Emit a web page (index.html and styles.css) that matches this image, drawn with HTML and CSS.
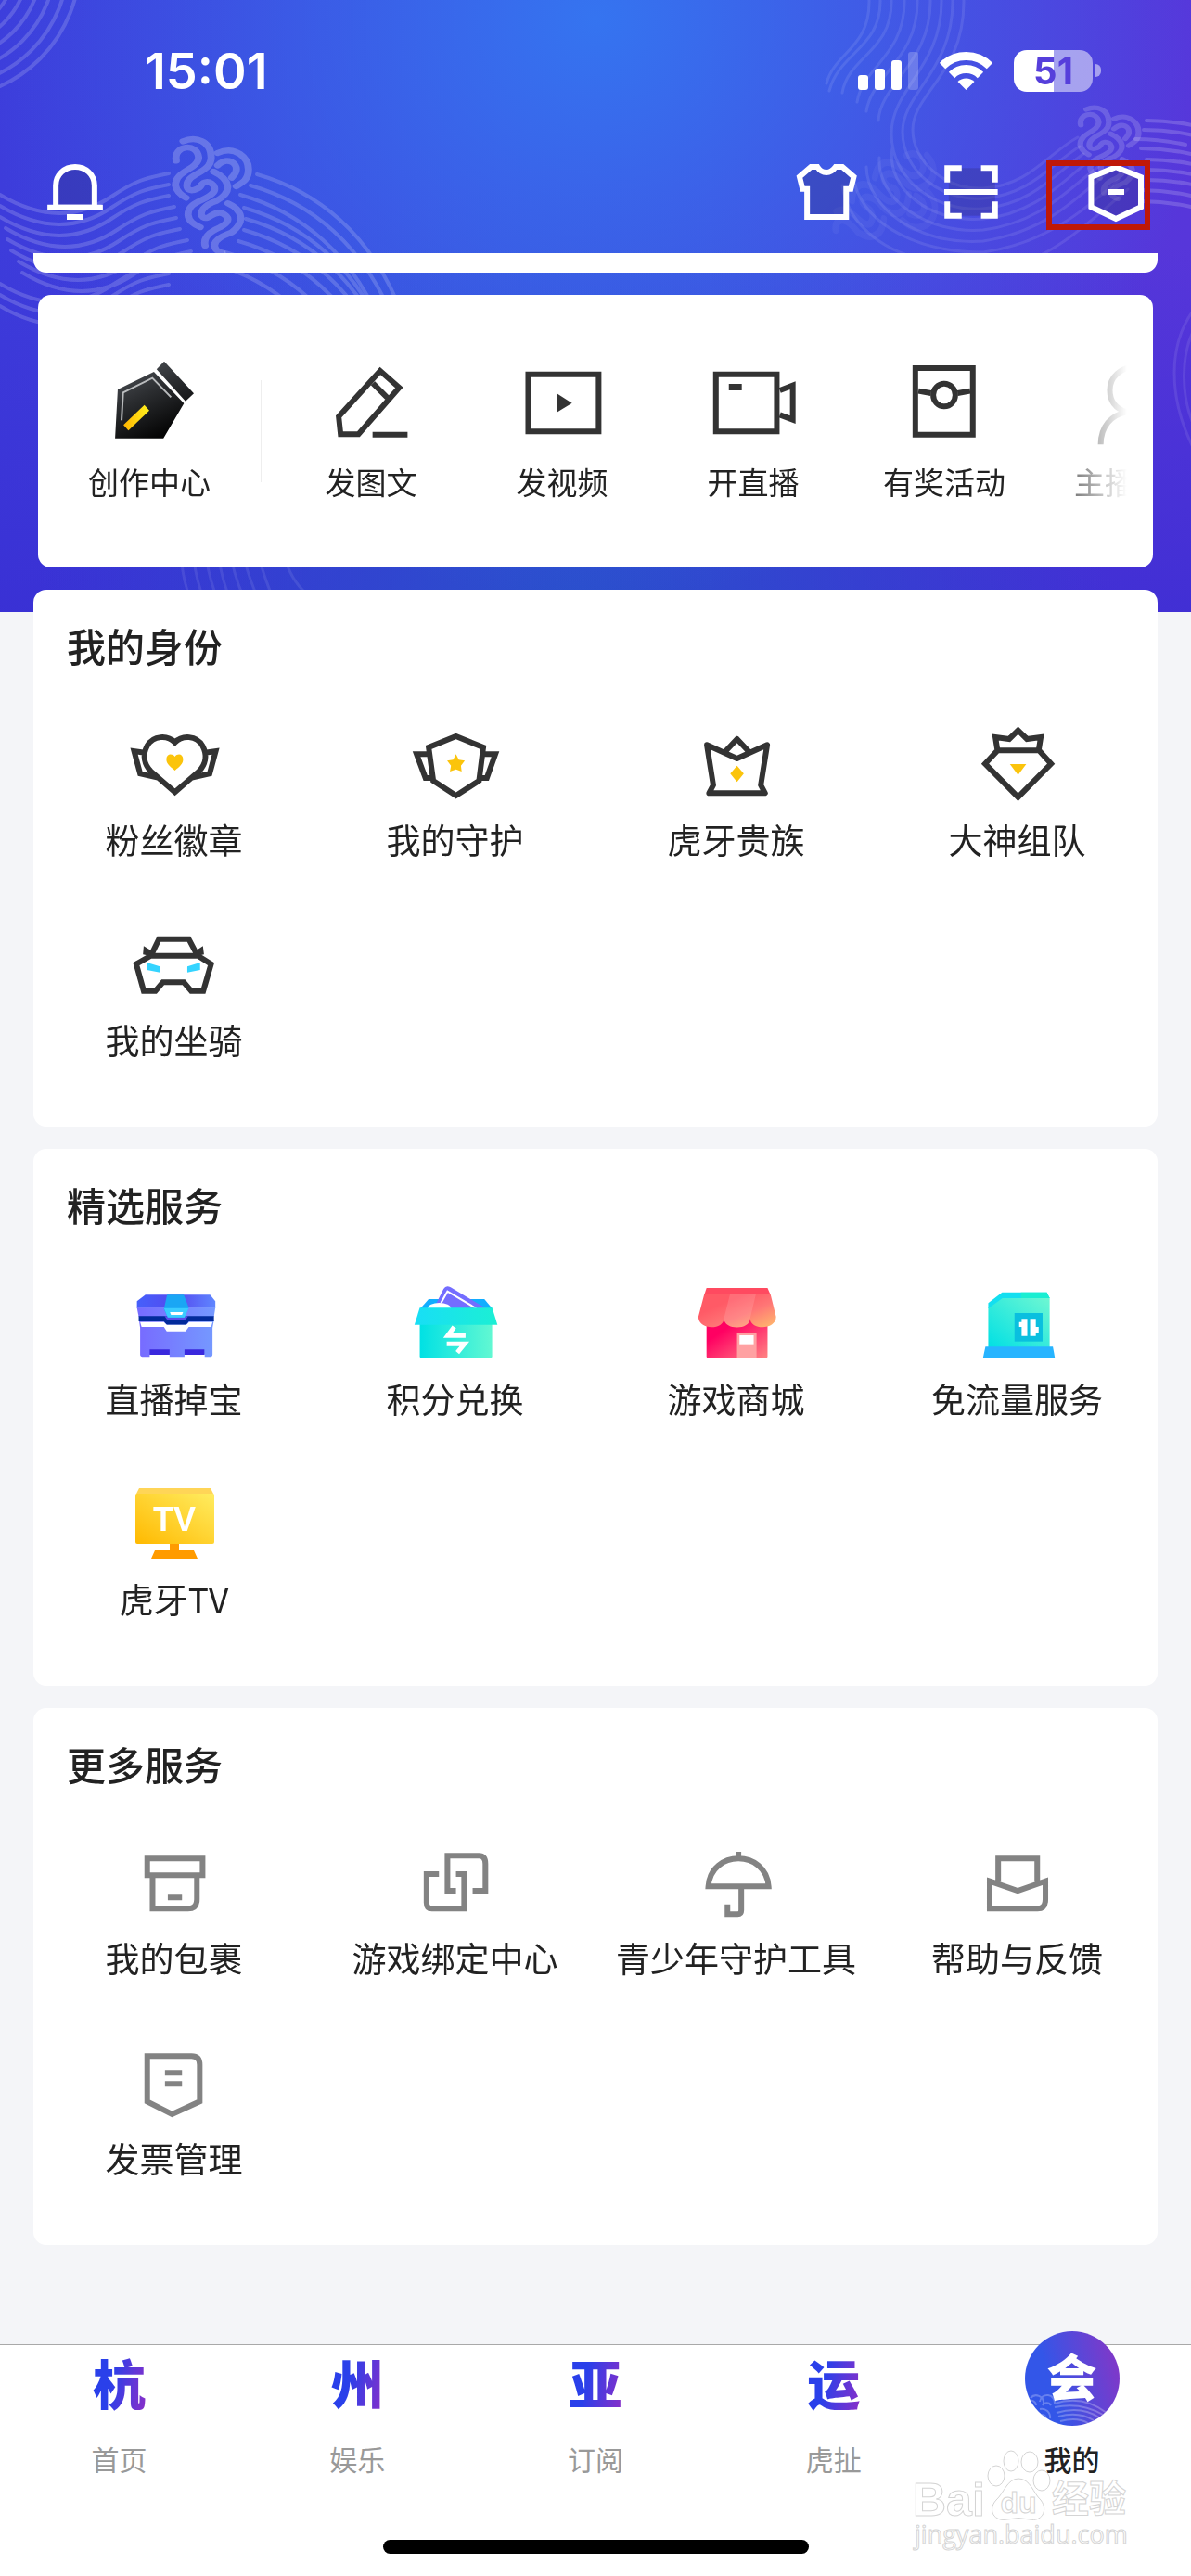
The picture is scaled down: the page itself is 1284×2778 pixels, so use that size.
FILE: index.html
```html
<!DOCTYPE html>
<html lang="zh-CN">
<head>
<meta charset="utf-8">
<meta name="viewport" content="width=device-width, initial-scale=1">
<title>我的</title>
<link rel="stylesheet" href="styles.css">
</head>
<body>
<div class="app">
  <div class="backdrop" aria-hidden="true">
    <svg class="waves" viewBox="0 0 1284 660" preserveAspectRatio="xMidYMin slice">
      <defs>
        <path id="swell" d="M0 210C50 240 90 232 120 212S160 192 182 187"/>
        <path id="crest" d="M277 188C340 206 400 250 434 340"/>
        <path id="bank" d="M1236 130C1256 130 1272 132 1290 136"/>
        <g id="knot">
          <path d="M482 457C515 440 556 455 556 510C556 560 492 560 492 600C492 630 530 610 530 598C545 575 575 600 562 622C545 650 495 650 495 695C497 715 508 725 527 735"/>
          <path d="M464 520C455 470 520 460 523 510C520 550 462 550 462 600C465 620 475 630 490 640"/>
          <path d="M573 495C620 470 655 510 654 550C654 580 640 590 622 603"/>
          <path d="M573 535C600 505 625 530 622 550C622 560 615 568 610 575"/>
          <path d="M562 555C605 580 615 620 570 650C540 660 520 690 535 703C550 715 560 680 585 690C610 705 600 722 580 735C550 750 535 770 540 795"/>
          <path d="M600 658C640 680 645 720 610 752C580 765 560 780 566 800C568 810 575 815 585 818"/>
        </g>
      </defs>
      <g class="rings">
        <circle cx="-60" cy="-40" r="146"/><circle cx="-60" cy="-40" r="133"/><circle cx="-60" cy="-40" r="119"/><circle cx="-60" cy="-40" r="105"/><circle cx="-60" cy="-40" r="91"/><circle cx="-60" cy="-40" r="77"/>
      </g>
      <g class="lines">
        <use href="#swell"/><use href="#swell" y="12"/><use href="#swell" y="24"/><use href="#swell" x="6" y="36"/><use href="#swell" x="8" y="48"/><use href="#swell" x="12" y="60"/><use href="#swell" x="20" y="72"/><use href="#swell" x="24" y="84"/><use href="#swell" y="96"/><use href="#swell" y="108"/><use href="#swell" y="120"/>
        <use href="#crest"/><use href="#crest" x="-7" y="12"/><use href="#crest" x="-18" y="22"/><use href="#crest" x="-14" y="36"/><use href="#crest" x="-12" y="48"/><use href="#crest" x="-14" y="60"/><use href="#crest" x="-20" y="72"/><use href="#crest" x="-34" y="84"/><use href="#crest" x="-48" y="96"/>
      </g>
      <g class="knot"><use href="#knot" transform="scale(.4095 .3333)"/></g>
      <g class="lines faint">
        <path d="M1039 0C1040 80 984 100 984 140C984 175 1020 205 1060 203C1110 200 1130 165 1162 148"/>
        <path d="M1027 0C1028 76 973 100 973 142C973 185 1015 217 1060 214C1112 210 1135 175 1164 158"/>
        <path d="M1015 0C1016 72 961 95 961 144C961 195 1010 229 1060 225C1114 220 1140 185 1168 166"/>
        <path d="M1003 0C1004 68 949 90 947 130M962 160C955 205 1005 241 1060 236C1118 230 1145 195 1174 174"/>
        <path d="M989 0C990 64 940 80 934 120M948 170C945 215 1000 253 1060 248C1122 240 1150 205 1184 180"/>
        <path d="M975 0C976 60 930 72 924 110M934 180C935 225 990 265 1060 260C1126 250 1160 215 1196 184"/>
        <path d="M961 0C962 56 915 60 908 100M920 190C925 235 980 272 1060 272C1130 262 1170 225 1206 194"/>
        <path d="M949 0C950 52 905 56 894 98M908 200C915 245 960 285 1040 284M1120 276C1150 262 1180 235 1216 204"/>
        <path d="M937 0C938 52 900 56 891 90"/>
      </g>
      <g class="lines">
        <use href="#bank"/><use href="#bank" x="-3" y="10"/><use href="#bank" x="-12" y="20"/><use href="#bank" x="-6" y="30"/><use href="#bank" y="42"/><use href="#bank" y="53"/><use href="#bank" y="64"/><use href="#bank" x="-6" y="75"/><use href="#bank" x="-6" y="87"/>
      </g>
      <g class="knot small"><use href="#knot" transform="translate(1013 -4) scale(.328 .267)"/></g>
      <g class="knot faint"><use href="#knot" transform="translate(1075 -70) rotate(70) scale(.4095 .3333)"/></g>
      <g class="lines faint">
        <path d="M196 605Q197 625 205 645M209 605Q212 625 219 645M223 605Q226 625 234 645M236 605Q240 625 247 645M250 605Q254 625 263 645M264 605Q269 625 278 645M280 605Q286 625 294 645M308 605Q316 630 336 645"/>
        <path d="M1290 330C1258 370 1258 430 1290 490M1290 350C1272 380 1272 430 1290 465"/>
      </g>
    </svg>
  </div>

  <header class="header">
    <div class="status">
      <time class="clock">15:01</time>
      <div class="status-icons">
        <svg class="signal" viewBox="0 0 65 41" role="img" aria-label="信号">
          <rect x="0" y="25" width="11" height="16" rx="3"/><rect x="18" y="18" width="11" height="23" rx="3"/><rect x="36" y="9" width="11" height="32" rx="3"/><rect x="54" y="0" width="11" height="41" rx="3" opacity=".22"/>
        </svg>
        <svg class="wifi" viewBox="0 0 57 42" role="img" aria-label="无线网络">
          <path d="M3 16A36 36 0 0 1 54 16M13 26A22 22 0 0 1 44 26"/><path class="dot" d="M28.500 42L19.500 33A13 13 0 0 1 37.500 33Z"/>
        </svg>
        <div class="battery"><span>51</span></div>
      </div>
    </div>
    <div class="toolbar">
      <button class="tool" type="button" aria-label="消息"><svg viewBox="110 519 176 216" preserveAspectRatio="none"><path class="tint" d="M147 671V600C147 565 170 540 198 540S249 565 249 600V671Z"/><path d="M125 671H271M176 702H220"/></svg></button>
      <div class="tools">
        <button class="tool" type="button" aria-label="装扮"><svg viewBox="520 519 176 216" preserveAspectRatio="none"><path class="tint" d="M567 540L537 572L545 611H557V702H660V611H672L680 572L650 540H632C625 552 618 558 608 558S590 552 584 540Z"/></svg></button>
        <button class="tool" type="button" aria-label="扫一扫"><svg viewBox="901 519 176 216" preserveAspectRatio="none"><rect class="shade" x="930" y="544" width="122" height="154"/><path d="M926 590V544H964M1015 544H1052V590M926 652V698H964M1015 698H1052V652M918 621H1059"/></svg></button>
        <button class="tool marked" type="button" aria-label="设置"><svg viewBox="1282 519 176 216" preserveAspectRatio="none"><path class="tint" d="M1370 541L1436 573V670L1370 708L1305 670V573Z"/><path d="M1348 621H1392"/></svg></button>
      </div>
    </div>
  </header>

  <main class="content">
    <div class="card-end"></div>

    <section class="creator">
      <button class="item lead" type="button">
        <svg class="icon solid" viewBox="276 198 234 288" preserveAspectRatio="none">
          <defs>
            <linearGradient id="ink" x1="0" y1="0" x2=".5" y2="1"><stop offset="0" stop-color="#565a60"/><stop offset=".5" stop-color="#2b2d30"/><stop offset="1" stop-color="#050505"/></linearGradient>
            <linearGradient id="gold"><stop offset="0" stop-color="#ffb400"/><stop offset="1" stop-color="#fff21f"/></linearGradient>
          </defs>
          <path fill="url(#ink)" d="M310 300L405 243L484 345L430 458H303ZM412 235L432 209L510 313L488 338Z"/>
          <path fill="none" stroke="#b9bbbd" stroke-width="2" d="M320 400L324 310L401 263L450 325"/>
          <path fill="url(#gold)" d="M325 415L380 350L393 368L338 433Z"/>
        </svg>
        <span>创作中心</span>
      </button>
      <div class="creator-list">
        <button class="item" type="button"><svg class="icon" viewBox="862 198 234 288" preserveAspectRatio="none"><path d="M1003 240L1053 294L946 445H899L894 388ZM984 280L1023 328M983 446H1075"/></svg><span>发图文</span></button>
        <button class="item" type="button"><svg class="icon" viewBox="1365 198 234 288" preserveAspectRatio="none"><rect x="1393" y="251" width="185" height="185"/><path class="fill" d="M1468 313L1508 344L1468 374Z"/></svg><span>发视频</span></button>
        <button class="item" type="button"><svg class="icon" viewBox="300 198 234 288" preserveAspectRatio="none"><rect x="319" y="251" width="160" height="185"/><path class="fill" d="M353 282H387V303H353Z"/><path d="M487 303L521 287V398L487 382"/></svg><span>开直播</span></button>
        <button class="item" type="button"><svg class="icon" viewBox="803 198 234 288" preserveAspectRatio="none"><rect x="844" y="231" width="151" height="215"/><ellipse cx="920" cy="318" rx="29" ry="37"/><path d="M852 305L885 312M955 312L988 305"/></svg><span>有奖活动</span></button>
        <button class="item" type="button"><svg class="icon" viewBox="1306 198 234 288" preserveAspectRatio="none"><path d="M1332 478C1332 420 1360 382 1400 373C1372 362 1356 340 1356 302C1356 260 1385 228 1423 228S1490 260 1490 302C1490 340 1474 362 1446 373C1486 382 1514 420 1514 478"/></svg><span>主播任务</span></button>
      </div>
    </section>

    <section class="card">
      <h2>我的身份</h2>
      <div class="grid">
        <button class="item" type="button"><svg class="icon" viewBox="286 48 251 288" preserveAspectRatio="none"><path d="M413 122C393 98 352 98 335 133C320 165 328 195 345 215L413 283L481 215C498 195 506 165 491 133C474 98 433 98 413 122ZM328 155L298 150L315 223L365 236M498 155L528 150L511 223L461 236"/><path class="accent" d="M413 168C405 157 390 158 389 175C388 192 400 200 413 213C426 200 437 192 436 175C435 158 420 157 413 168Z"/></svg><span>粉丝徽章</span></button>
        <button class="item" type="button"><svg class="icon" viewBox="1078 48 251 288" preserveAspectRatio="none"><path d="M1205 102L1282 138L1270 246L1205 294L1141 246L1128 138ZM1128 160H1094L1119 237H1142M1282 160H1316L1292 237H1270"/><path class="accent" d="M1205 160L1213 178L1230 181L1219 197L1221 216L1205 209L1188 216L1191 197L1180 181L1197 178Z"/></svg><span>我的守护</span></button>
        <button class="item" type="button"><svg class="icon" viewBox="223 48 251 288" preserveAspectRatio="none"><path stroke-linejoin="round" d="M265 130L350 174L435 130L417 260L429 286H271L283 260ZM318 150L350 111L382 150"/><path class="accent" d="M350 197L369 223L350 250L331 223Z"/></svg><span>虎牙贵族</span></button>
        <button class="item" type="button"><svg class="icon" viewBox="1015 48 251 288" preserveAspectRatio="none"><path d="M1084 148H1201L1235 191L1142 299L1049 191ZM1084 148L1078 105L1117 111L1142 83L1167 111L1206 105L1200 148"/><path class="accent" d="M1119 192H1165L1142 227Z"/></svg><span>大神组队</span></button>
        <button class="item" type="button"><svg class="icon" viewBox="286 696 251 288" preserveAspectRatio="none"><path d="M347 808L368 758H452L475 808M304 839L345 812H478L515 839L493 926H459L438 898H379L358 926H325Z"/><path class="fill" d="M325 781L349 797L341 812L323 808ZM492 781L470 797L478 812L495 808Z"/><path fill="#35d4ff" stroke="none" d="M334 834L371 847V866L334 858ZM484 834L448 847V866L484 858Z"/></svg><span>我的坐骑</span></button>
      </div>
    </section>

    <section class="card">
      <h2>精选服务</h2>
      <div class="grid">
        <button class="item" type="button"><svg class="icon solid" viewBox="286 57 251 288" preserveAspectRatio="none">
          <defs><linearGradient id="lid"><stop offset="0" stop-color="#4560fb"/><stop offset=".5" stop-color="#5549ef"/><stop offset="1" stop-color="#5f86ff"/></linearGradient><linearGradient id="chest"><stop offset="0" stop-color="#776bff"/><stop offset="1" stop-color="#7599ff"/></linearGradient></defs>
          <path fill="url(#lid)" d="M330 109H512L527 130V152H306V130Z"/><path fill="url(#chest)" d="M306 151H527L523 180H311Z"/>
          <path fill="url(#chest)" d="M312 192H523L519 216V302Q519 310 510 310H497V302H440V310H398V302H342V310H325Q315 310 315 302V216Z"/>
          <path fill="#022b9b" d="M311 178H523V195H452L445 206H390L382 195H311Z"/><path fill="#5a4de8" d="M384 178H450L443 190H391Z"/>
          <path fill="#fff" d="M315 197H382L390 206H445L453 197H519L515 213H452L443 227H390L382 213H319Z"/>
          <path fill="#3a28dd" d="M342 286H398V303H342ZM440 286H496V303H440Z"/>
          <path fill="#1aa6f4" d="M391 109H438L452 150L440 182H393L382 155Z"/><path fill="#3acbff" d="M382 152H452L440 182H393Z"/><path fill="#fff" d="M399 165H436L433 174H402Z"/>
        </svg><span>直播掉宝</span></button>
        <button class="item" type="button"><svg class="icon solid" viewBox="1078 57 251 288" preserveAspectRatio="none">
          <defs><linearGradient id="box"><stop offset="0" stop-color="#00e1e4"/><stop offset="1" stop-color="#62f8d2"/></linearGradient><linearGradient id="flap"><stop offset="0" stop-color="#18def6"/><stop offset="1" stop-color="#1cefd4"/></linearGradient></defs>
          <path fill="#12adff" d="M1128 123H1285L1307 153H1105Z"/>
          <path fill="#746dff" d="M1148 140L1170 90Q1177 76 1190 85L1290 153H1148Z"/><path fill="none" stroke="#fff" stroke-width="2" d="M1163 135L1181 98L1262 153"/>
          <ellipse cx="1158" cy="153" rx="33" ry="18" fill="#fff"/>
          <path fill="url(#box)" d="M1103 204H1307V309Q1307 315 1300 315H1110Q1103 315 1103 309Z"/><path fill="url(#flap)" d="M1103 151H1307L1322 206H1088Z"/>
          <path fill="none" stroke="#fff" stroke-width="5" d="M1232 241H1182L1200 213M1179 268H1229L1209 296"/>
        </svg><span>积分兑换</span></button>
        <button class="item" type="button"><svg class="icon solid" viewBox="223 57 251 288" preserveAspectRatio="none">
          <defs><linearGradient id="shop" x1="0" y1="0" x2="1" y2="1"><stop offset=".3" stop-color="#ff0062"/><stop offset="1" stop-color="#ff8583"/></linearGradient><linearGradient id="awning" x1="0" y1="0" x2="1" y2="1"><stop offset=".3" stop-color="#ff5a66"/><stop offset=".6" stop-color="#ff7676"/><stop offset="1" stop-color="#ffbd6c"/></linearGradient></defs>
          <path fill="url(#shop)" d="M264 180H436V309Q436 315 430 315H270Q264 315 264 309Z"/><path fill="#ff4a60" d="M264 87H436L444 108H258Z"/>
          <path fill="url(#awning)" d="M258 106H444L460 180C460 224 387 224 387 185C387 224 313 224 313 185C313 224 241 224 241 180Z"/><path fill="#fff" opacity=".12" d="M330 108H403L387 185C387 224 313 224 313 185Z"/>
          <path fill="#ffa1a2" d="M350 232H405V313H350Z"/><path fill="#fff" d="M357 240H397V269H357Z"/>
        </svg><span>游戏商城</span></button>
        <button class="item" type="button"><svg class="icon solid" viewBox="1015 57 251 288" preserveAspectRatio="none">
          <defs><linearGradient id="sim" x1="0" y1="1" x2="1" y2="0"><stop offset="0" stop-color="#00e0e4"/><stop offset="1" stop-color="#6ff7d2"/></linearGradient></defs>
          <path fill="url(#sim)" d="M1058 150L1097 118H1231V280H1058Z"/><path fill="#13dff0" d="M1058 136L1097 101H1223L1231 120H1098L1058 153Z"/><path fill="#1aeed2" d="M1150 101H1223L1231 120H1150Z"/>
          <path fill="#0abfdf" d="M1132 168H1211V260H1132Z"/><path fill="#fff" d="M1152 187H1168V242H1152V213H1145V197H1152ZM1176 187H1192V213H1200V232H1192V242H1176Z"/>
          <path fill="#27b4ff" d="M1050 277H1240L1246 314H1043Z"/>
        </svg><span>免流量服务</span></button>
        <button class="item" type="button"><svg class="icon solid" viewBox="0 0 96 96">
          <defs><linearGradient id="tv" x1="0" y1="1" x2="1" y2="0"><stop offset="0" stop-color="#ffb900"/><stop offset="1" stop-color="#ffec60"/></linearGradient></defs>
          <path fill="#ffd557" d="M10 10H87L91 18H6Z"/><rect x="6" y="16" width="85" height="54" rx="2" fill="url(#tv)"/><path fill="#ff9b00" d="M43 70H53V77H69L73 86H23L27 77H43Z"/>
          <text class="tv-text" x="48" y="56" text-anchor="middle">TV</text>
        </svg><span>虎牙TV</span></button>
      </div>
    </section>

    <section class="card">
      <h2>更多服务</h2>
      <div class="grid muted">
        <button class="item" type="button"><svg class="icon" viewBox="286 66 251 288" preserveAspectRatio="none"><path d="M335 133H491V187H335ZM350 190V295H450Q475 295 475 265V190M393 259H433"/></svg><span>我的包裹</span></button>
        <button class="item" type="button"><svg class="icon" viewBox="1078 66 251 288" preserveAspectRatio="none"><path d="M1157 183H1122V275Q1122 295 1137 295H1228V183H1205M1205 237H1181V124H1270Q1288 124 1288 150V237H1252"/></svg><span>游戏绑定中心</span></button>
        <button class="item" type="button"><svg class="icon" viewBox="223 66 251 288" preserveAspectRatio="none"><path d="M269 223C276 103 432 103 439 223ZM354 111V133M362 223V300Q362 313 352 313H323V281"/></svg><span>青少年守护工具</span></button>
        <button class="item" type="button"><svg class="icon" viewBox="1015 66 251 288" preserveAspectRatio="none"><path d="M1086 208V133H1196V208M1062 206L1141 237L1219 206V265Q1219 295 1197 295H1062Z"/></svg><span>帮助与反馈</span></button>
        <button class="item" type="button"><svg class="icon" viewBox="286 714 251 288" preserveAspectRatio="none"><path d="M335 772H460Q483 772 483 800V919L405 960L335 919ZM385 826H433M385 862H433"/></svg><span>发票管理</span></button>
      </div>
    </section>
  </main>

  <nav class="tabs">
    <div class="tab-row">
      <a class="tab" href="#home"><span class="glyph"><b>杭</b></span><span class="name">首页</span></a>
      <a class="tab" href="#fun"><span class="glyph"><b>州</b></span><span class="name">娱乐</span></a>
      <a class="tab" href="#subs"><span class="glyph"><b>亚</b></span><span class="name">订阅</span></a>
      <a class="tab" href="#talk"><span class="glyph"><b>运</b></span><span class="name">虎扯</span></a>
      <a class="tab active" href="#me" aria-current="page"><span class="glyph">
        <svg class="ripples" viewBox="0 0 102 102" aria-hidden="true"><path d="M6 72A8 8 0 0 1 20 78M2 76A6 6 0 0 1 12 80M16 76A8 8 0 0 1 32 78M19 80A5 5 0 0 1 28 80M16 84A9 9 0 0 1 27 94M18 90A5 5 0 0 1 22 98M32 78Q62 68 88 88M32 82Q60 76 84 90M34 88Q60 80 80 93M36 92Q58 86 74 96M38 97Q56 92 68 99"/></svg><b>会</b></span><span class="name">我的</span></a>
    </div>
    <div class="home-bar"></div>
    <svg class="watermark" viewBox="0 0 240 120" aria-hidden="true">
      <text class="wm-brand" x="4" y="77">Bai</text>
      <path d="M118 37C131 37 134 53 142 60C151 72 142 84 130 81Q118 78 106 81C92 84 84 71 94 60C102 53 106 37 118 37Z"/>
      <ellipse cx="94" cy="34" rx="9" ry="11"/><ellipse cx="110" cy="18" rx="8" ry="11"/><ellipse cx="130" cy="19" rx="9" ry="11"/><ellipse cx="143" cy="39" rx="9" ry="11"/>
      <text class="wm-du" x="118" y="74" text-anchor="middle">du</text>
      <text class="wm-cn" x="154" y="73">经验</text>
      <text class="wm-url" x="6" y="107">jingyan.baidu.com</text>
    </svg>
  </nav>
</div>
</body>
</html>
```
FILE: styles.css
```css
*,
*::after { box-sizing: border-box; }

body {
  margin: 0;
  background: #f4f5f8;
  color: #222;
  font-family: "Noto Sans CJK SC", sans-serif;
}

button {
  padding: 0;
  border: 0;
  background: none;
  color: inherit;
  font: inherit;
}

svg { display: block; }

.app {
  position: relative;
  display: flex;
  flex-direction: column;
  min-height: 100vh;
}

/* backdrop */
.backdrop {
  position: absolute;
  inset: 0 0 auto;
  height: 660px;
  overflow: hidden;
  background:
    radial-gradient(ellipse 52% 95% at 50% 3%, #3574f0, rgba(53, 116, 240, 0)),
    radial-gradient(ellipse 45% 70% at 48% 100%, #2a50cc, rgba(42, 80, 204, 0)),
    linear-gradient(rgba(58, 44, 214, 0) 40%, rgba(56, 44, 210, .7)),
    linear-gradient(90deg, #3d3cdb, #4440da 45%, #5736da);
}

.waves {
  width: 100%;
  height: 100%;
  fill: none;
  stroke: #fff;
  stroke-linecap: round;
}

.rings { stroke-width: 4; opacity: .16; }
.lines { stroke-width: 4; opacity: .17; }
.knot { stroke-width: 19; opacity: .22; }
.knot.small { opacity: .16; }
.lines.faint { stroke-width: 3; opacity: .09; }
.knot.faint { opacity: .04; }

/* header */
.header {
  position: relative;
  height: 273px;
  padding: 48px 45px 0;
  color: #fff;
}

.status {
  display: flex;
  align-items: center;
  justify-content: space-between;
  height: 56px;
  padding: 0 51px 0 111px;
}

.clock {
  padding-top: 2px;
  font: 600 54px/56px Inter, sans-serif;
}

.status-icons {
  display: flex;
  align-items: center;
  gap: 23px;
}

.signal { width: 65px; height: 41px; fill: #fff; }
.wifi { width: 57px; height: 42px; fill: none; stroke: #fff; stroke-width: 9; }
.wifi .dot { fill: #fff; stroke: none; }

.battery {
  position: relative;
  width: 85px;
  height: 45px;
  margin-right: 10px;
  border-radius: 14px;
  background: linear-gradient(90deg, #fff 51%, rgba(255, 255, 255, .5) 51%);
  color: #563fdb;
  font: 700 40px/45px Inter, sans-serif;
  text-align: center;
}

.battery::after {
  content: "";
  position: absolute;
  top: 15px;
  left: 88px;
  width: 6px;
  height: 14px;
  border-radius: 0 6px 6px 0;
  background: rgba(255, 255, 255, .5);
}

.toolbar {
  display: flex;
  justify-content: space-between;
  margin-top: 69px;
}

.tools { display: flex; gap: 84px; }

.tool {
  position: relative;
  width: 72px;
  height: 72px;
}

.tool svg {
  width: 72px;
  height: 72px;
  fill: none;
  stroke: #fff;
  stroke-width: 6;
}

.tool svg * { vector-effect: non-scaling-stroke; }
.tool svg .tint { fill: rgba(46, 44, 120, .3); }
.tool svg .shade { fill: rgba(46, 44, 120, .3); stroke: none; }

.marked::after {
  content: "";
  position: absolute;
  top: 0;
  right: -1px;
  width: 112px;
  height: 75px;
  border: 6px solid #bf1807;
}

/* content */
.content {
  position: relative;
  flex: 1;
  display: flex;
  flex-direction: column;
  gap: 24px;
  padding: 0 36px 107px;
}

.card-end {
  height: 21px;
  border-radius: 0 0 14px 14px;
  background: #fff;
}

.card,
.creator {
  border-radius: 14px;
  background: #fff;
}

.item {
  display: flex;
  flex-direction: column;
  align-items: center;
  gap: 6px;
  font-size: 37px;
  line-height: 54px;
  white-space: nowrap;
}

.icon {
  width: 96px;
  height: 96px;
  overflow: visible;
  fill: none;
  stroke: #333;
  stroke-width: 6;
}

.icon * { vector-effect: non-scaling-stroke; }
.icon.solid { stroke: none; }
.icon .fill { fill: #333; stroke: none; }
.icon .accent { fill: #fbc40c; stroke: none; }
.muted .icon { stroke: #838383; }

.tv-text {
  fill: #fff;
  font: 700 36px "Liberation Sans", sans-serif;
}

.creator {
  display: flex;
  margin: 0 5px;
  padding: 68px 28px 66px 0;
}

.creator .item {
  flex: none;
  width: 206px;
  gap: 10px;
  font-size: 33px;
}

.creator .lead {
  width: 240px;
}

.creator-list {
  flex: 1;
  display: flex;
  min-width: 0;
  padding-left: 16px;
  overflow: hidden;
  background: linear-gradient(#eee, #eee) 0 24px / 1px 110px no-repeat;
  -webkit-mask-image: linear-gradient(270deg, transparent, #000 96px);
  mask-image: linear-gradient(270deg, transparent, #000 96px);
}

.card { padding: 30px 0 67px; }

.card h2 {
  margin: 0 0 50px;
  padding: 0 36px;
  font-size: 42px;
  font-weight: 500;
  line-height: 60px;
}

.grid {
  display: grid;
  grid-template-columns: repeat(4, 1fr);
  row-gap: 60px;
}

/* tab bar */
.tabs {
  position: relative;
  padding-bottom: 24px;
  border-top: 1px solid #a9a9a9;
  background: #fff;
}

.tab-row {
  display: grid;
  grid-template-columns: repeat(5, 1fr);
}

.tab {
  display: flex;
  flex-direction: column;
  align-items: center;
  gap: 15px;
  margin-top: -15px;
  color: #999;
  font-size: 30px;
  line-height: 40px;
  text-decoration: none;
}

.glyph {
  position: relative;
  display: flex;
  align-items: center;
  justify-content: center;
  width: 102px;
  height: 102px;
  padding-top: 6px;
  border-radius: 50%;
}

.glyph b {
  background: linear-gradient(100deg, #2a40ea 35%, #8a2fc8);
  -webkit-background-clip: text;
  background-clip: text;
  color: transparent;
  font-size: 57px;
  font-weight: 900;
  line-height: 72px;
}

.tab.active { color: #222; font-weight: 500; }

.tab.active .glyph {
  overflow: hidden;
  padding: 0 0 6px;
  background: linear-gradient(75deg, #3356e8 30%, #8a34c4);
}

.tab.active b { position: relative; background: none; color: #fff; font-size: 54px; }

.ripples {
  position: absolute;
  inset: 0;
  fill: none;
  stroke: rgba(255, 255, 255, .25);
  stroke-width: 2;
}

.home-bar {
  width: 459px;
  height: 15px;
  margin: 68px auto 0;
  border-radius: 8px;
  background: #000;
}

.watermark {
  position: absolute;
  top: 107px;
  right: 64px;
  width: 240px;
  height: 120px;
  fill: #fff;
  stroke: #d4d4d4;
  stroke-width: 1;
}

.wm-brand { font: 700 50px "Liberation Sans", sans-serif; }
.wm-du { font: 700 32px "Liberation Sans", sans-serif; }
.wm-cn { font: 700 40px "Noto Sans CJK SC", sans-serif; }
.wm-url { font: 400 27px "Open Sans", sans-serif; }
```
